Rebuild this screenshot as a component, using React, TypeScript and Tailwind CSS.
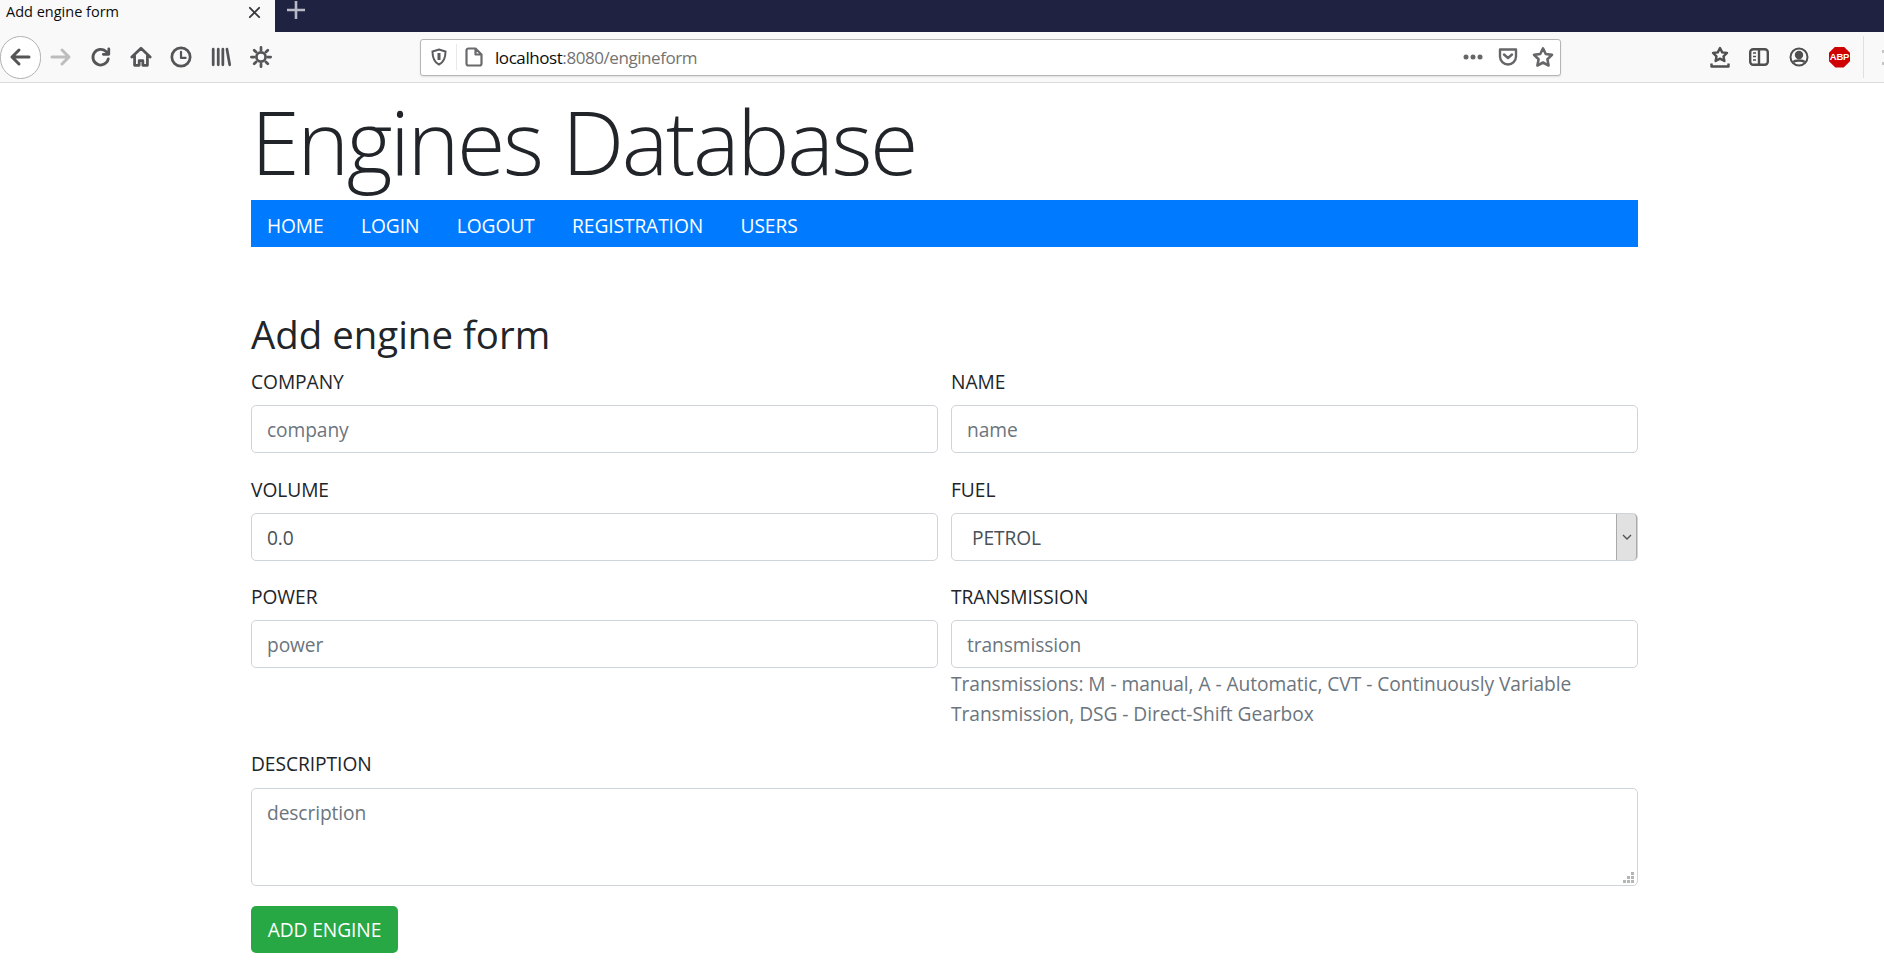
import React from "react";

const font = "font-['Open_Sans','Noto_Sans',sans-serif]";
const inputCls = "h-[48px] w-full rounded-[5px] border border-[#ced4da] bg-white px-[15px] pt-[1px] text-[19.2px] tracking-[-0.1px] text-[#495057] placeholder:text-[#6c757d] outline-none";

function Ic({ children, w = 24, cls = "" }: { children: React.ReactNode; w?: number; cls?: string }) {
  return (
    <svg width={w} height={w} viewBox="0 0 24 24" fill="none" stroke="#555557" strokeWidth="3" strokeLinecap="round" strokeLinejoin="round" className={`shrink-0 ${cls}`}>
      {children}
    </svg>
  );
}

function Field({ label, children, cls = "" }: { label: string; children: React.ReactNode; cls?: string }) {
  return (
    <div className={cls}>
      <label className="mb-[9px] block text-[19.2px] leading-[29px] tracking-[-0.05px] text-[#212529]">{label}</label>
      {children}
    </div>
  );
}

export default function App() {
  return (
    <div className={`${font} h-[970px] overflow-hidden bg-white`}>
      <div className="flex h-[32px] bg-[#1f2341]">
        <div className="flex w-[275px] items-center justify-between bg-[#f9f9fa] pb-[8px] pl-[6px] pr-[14px] text-[14.5px] text-[#0c0c0d]">
          <span>Add engine form</span>
          <svg width="13" height="13" viewBox="0 0 14 14" stroke="#38383d" strokeWidth="2" strokeLinecap="round"><path d="M2 2l10 10M12 2L2 12" /></svg>
        </div>
        <svg width="20" height="20" viewBox="0 0 20 20" stroke="#b9bac6" strokeWidth="2.600" className="ml-[11px]"><path d="M10 1v18M1 10h18" /></svg>
      </div>

      <div className="flex h-[51px] items-center border-b border-[#dcdcdd] bg-[#f9f9fa]">
        <div className="flex h-[43px] w-[41px] shrink-0 items-center justify-center rounded-full border border-[#b1b1b3] bg-white pr-[2px]">
          <Ic w={24}><path d="M21 12H4M11 5l-7 7 7 7" /></Ic>
        </div>
        <Ic w={24} cls="ml-[8px]"><g stroke="#bdbdbe"><path d="M3 12h17M13 5l7 7-7 7" /></g></Ic>
        <Ic w={22} cls="ml-[17px]"><path d="M20 14a8.500 8.500 0 1 1-2.500-8l2.500 2.500M20.500 3v6h-6" /></Ic>
        <Ic w={22} cls="ml-[18px]"><path d="M2 12 12 2.500 22 12M5 10v11h5v-5h4v5h5V10" /></Ic>
        <Ic w={22} cls="ml-[18px]"><circle cx="12" cy="12" r="10" /><path d="M12 6.500V13h5" strokeWidth="2.400" /></Ic>
        <Ic w={22} cls="ml-[18px]"><path d="M3.500 3.500v17M9 3.500v17M14 3.500v17M18.500 3.500l3 17" /></Ic>
        <Ic w={22} cls="ml-[18px]"><circle cx="12" cy="12" r="5" /><path d="M12 1.500v3M12 19.500v3M1.500 12h3M19.500 12h3M4.600 4.600l2 2M17.400 17.400l2 2M4.600 19.400l2-2M17.400 6.600l2-2" /></Ic>

        <div className="ml-[148px] flex h-[37px] w-[1141px] shrink-0 items-center rounded-[3px] border border-[#b5b5b6] bg-white shadow-[0_1px_2px_rgba(0,0,0,0.1)]">
          <svg width="16" height="18" viewBox="0 0 16 18" fill="none" stroke="#5b5b5d" strokeWidth="2" className="ml-[10px] shrink-0"><path d="M8 1.500 14.500 3.500c0 6-1 10.500-6.500 13C2.500 14 1.500 9.500 1.500 3.500z" /><path d="M8 5v7" strokeWidth="3" /></svg>
          <div className="ml-[9px] h-[26px] w-px bg-[#e8e8e9]" />
          <svg width="18" height="20" viewBox="0 0 18 20" fill="none" stroke="#6a6a6c" strokeWidth="2.200" strokeLinejoin="round" className="ml-[8px] shrink-0"><path d="M3.500 1.500h7l6 6v9a2 2 0 0 1-2 2h-11a2 2 0 0 1-2-2v-13a2 2 0 0 1 2-2zM10.500 1.500v6h6" /></svg>
          <div className="ml-[12px] pt-[1px] text-[17px] tracking-[-0.43px] text-[#737373]"><span className="text-[#0c0c0d]">localhost</span>:8080/engineform</div>
          <div className="ml-auto flex items-center">
            <svg width="20" height="6" viewBox="0 0 20 6" fill="#666668" className="shrink-0"><circle cx="3" cy="3" r="2.500" /><circle cx="10" cy="3" r="2.500" /><circle cx="17" cy="3" r="2.500" /></svg>
            <svg width="20" height="18" viewBox="0 0 20 18" fill="none" stroke="#666668" strokeWidth="2.400" strokeLinejoin="round" strokeLinecap="round" className="ml-[15px] shrink-0"><path d="M2 1.500h16v7a8 8 0 0 1-16 0z" /><path d="M6 6.500l4 3.500 4-3.500" /></svg>
            <svg width="22" height="22" viewBox="0 0 24 24" fill="none" stroke="#666668" strokeWidth="2.800" strokeLinejoin="round" className="ml-[14px] mr-[6px] shrink-0"><path d="m12 2.500 3 6.300 6.800.9-5 4.800 1.300 6.800-6.100-3.300-6.100 3.300 1.300-6.800-5-4.800 6.800-.9z" /></svg>
          </div>
        </div>

        <div className="ml-[149px] flex shrink-0 items-center">
          <svg width="20" height="22" viewBox="0 0 20 22" fill="none" stroke="#4f4f50" strokeWidth="2.400" strokeLinejoin="round" className="shrink-0"><path d="m10 2 2.200 4.400 4.800.6-3.500 3.300.9 4.700-4.400-2.400L5.600 15l.9-4.700L3 7l4.800-.6z" /><path d="M1.500 17.500v3h17v-3" /></svg>
          <svg width="20" height="18" viewBox="0 0 20 18" fill="none" stroke="#4f4f50" strokeWidth="2.400" className="ml-[19px] shrink-0"><rect x="1.200" y="1.200" width="17.600" height="15.600" rx="3" /><path d="M10 1v16" /><path d="M4 5h3M4 8.500h3M4 12h3" strokeWidth="1.500" /></svg>
          <svg width="20" height="20" viewBox="0 0 20 20" fill="none" stroke="#4f4f50" strokeWidth="2" className="ml-[20px] shrink-0"><circle cx="10" cy="10" r="8.500" /><circle cx="10" cy="8" r="3.200" fill="#4f4f50" /><path d="M4.500 15c1.500-2 9.500-2 11 0" strokeWidth="2.500" /></svg>
          <div className="relative ml-[20px] flex h-[21px] w-[21px] shrink-0 items-center justify-center [clip-path:polygon(30%_0,70%_0,100%_30%,100%_70%,70%_100%,30%_100%,0_70%,0_30%)] bg-[#cf0000] font-['Liberation_Sans',sans-serif] text-[9.500px] font-bold tracking-[-0.2px] text-white">ABP</div>
          <div className="ml-[13px] h-[42px] w-px bg-[#e0e0e1]" />
          <div className="ml-[18px] h-[15px] w-[3px] border-y-[3px] border-[#c5c5c6]" />
        </div>
      </div>

      <div className="ml-[251px] w-[1387px]">
        <h1 className="h-[117px] whitespace-nowrap pl-0 pt-[8px] text-[88px] font-light leading-[100px] tracking-[-2.4px] text-[#212529]">Engines Database</h1>
        <nav className="flex h-[47px] items-center gap-[37.500px] bg-[#007bff] px-[16px] pt-[5px] text-[19.2px] tracking-[-0.1px] text-white">
          <span>HOME</span><span>LOGIN</span><span>LOGOUT</span><span>REGISTRATION</span><span>USERS</span>
        </nav>
        <h2 className="mt-[64px] text-[38.400px] leading-[46px] text-[#212529]">Add engine form</h2>
        <div className="mt-[10px] grid grid-cols-2 gap-x-[13px]">
          <Field label="COMPANY" cls="mb-[22px]"><input className={inputCls} placeholder="company" readOnly /></Field>
          <Field label="NAME" cls="mb-[22px]"><input className={inputCls} placeholder="name" readOnly /></Field>
          <Field label="VOLUME" cls="mb-[21px]"><input className={inputCls} value="0.0" readOnly /></Field>
          <Field label="FUEL" cls="mb-[21px]">
            <div className="flex h-[48px] items-center justify-between rounded-[5px] border border-[#ced4da] bg-white pl-[20px] text-[19.2px] tracking-[-0.1px] text-[#495057]">
              <span className="pt-[2px]">PETROL</span>
              <div className="flex h-full w-[21px] items-center justify-center rounded-r-[4px] border-x border-[#a9a9a9] bg-[#e1e1e1]">
                <svg width="10" height="6" viewBox="0 0 10 6" fill="none" stroke="#505050" strokeWidth="1.300"><path d="M1 1l4 4 4-4" /></svg>
              </div>
            </div>
          </Field>
          <Field label="POWER"><input className={inputCls} placeholder="power" readOnly /></Field>
          <Field label="TRANSMISSION">
            <input className={inputCls} placeholder="transmission" readOnly />
            <p className="mt-[1px] text-[19.2px] leading-[30px] tracking-[-0.06px] text-[#6c757d]">Transmissions: M - manual, A - Automatic, CVT - Continuously Variable Transmission, DSG - Direct-Shift Gearbox</p>
          </Field>
        </div>
        <Field label="DESCRIPTION" cls="mt-[20px]">
          <div className="relative pt-[1px]">
            <textarea className="block h-[98px] w-full resize-none rounded-[5px] border border-[#ced4da] bg-white px-[15px] py-[10px] text-[19.2px] tracking-[-0.1px] text-[#495057] placeholder:text-[#6c757d] outline-none" placeholder="description" readOnly />
            <svg width="11" height="11" viewBox="0 0 11 11" fill="#b5b5b5" className="absolute bottom-[3px] right-[4px]"><rect x="8" y="0" width="3" height="3" /><rect x="4" y="4" width="3" height="3" /><rect x="8" y="4" width="3" height="3" /><rect x="0" y="8" width="3" height="3" /><rect x="4" y="8" width="3" height="3" /><rect x="8" y="8" width="3" height="3" /></svg>
          </div>
        </Field>
        <button className="mt-[20px] h-[47px] w-[147px] rounded-[5px] bg-[#28a745] pt-[1px] text-[19.2px] tracking-[-0.1px] text-white">ADD ENGINE</button>
      </div>
    </div>
  );
}
